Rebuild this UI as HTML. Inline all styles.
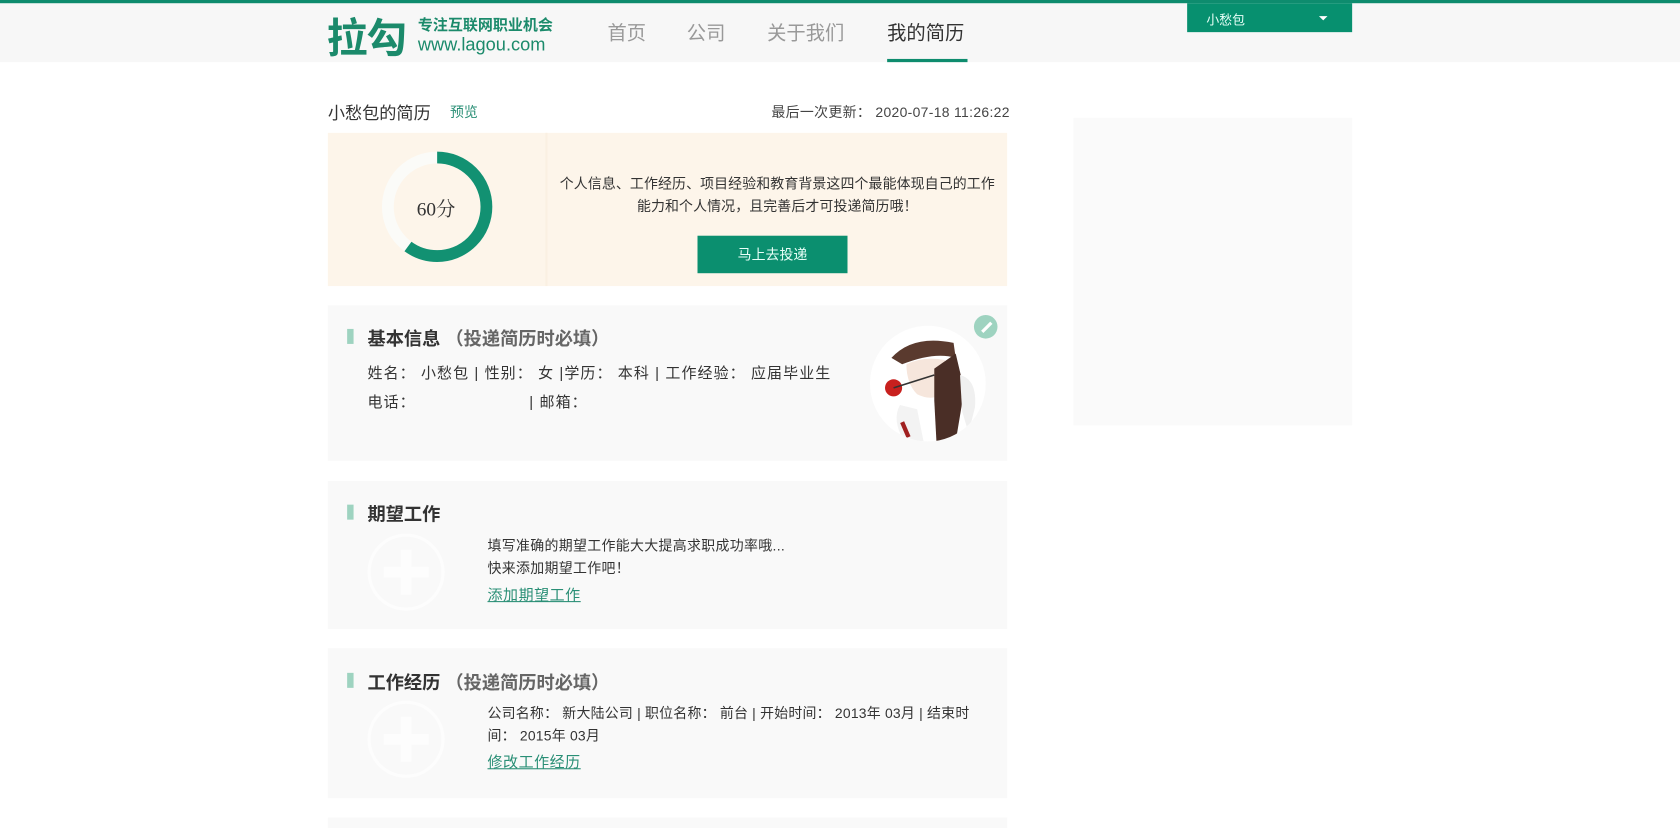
<!DOCTYPE html>
<html><head><meta charset="utf-8">
<style>
html,body{margin:0;padding:0;background:#fff;overflow:hidden;width:1680px;height:823px}
#w{position:absolute;left:0;top:0;width:1568px;height:768px;transform:scale(1.07143);transform-origin:0 0;font-family:"Liberation Sans","Noto Sans CJK SC",sans-serif;color:#333}
.a{position:absolute;white-space:nowrap}
.card{position:absolute;left:306px;width:634px;background:#f9f9f9}
.bar{position:absolute;left:18px;width:6px;height:14px;background:#9ed3c0}
.tt{position:absolute;left:37px;font-size:17px;font-weight:bold;color:#333}
.tt span{color:#666}
.plus{position:absolute;left:37px;width:66px;height:66px;border:3px solid #fdfdfd;border-radius:50%}
.plus:before{content:"";position:absolute;left:28px;top:12px;width:10px;height:42px;background:#fdfdfd}
.plus:after{content:"";position:absolute;left:12px;top:28px;width:42px;height:10px;background:#fdfdfd}
.lk{color:#2a8f76;text-decoration:underline;font-size:14px;letter-spacing:0.5px}
</style></head><body><div id="w">
<div class="a" style="left:0;top:0;width:1568px;height:58px;background:#f7f7f7"></div>
<div class="a" style="left:0;top:0;width:1568px;height:3px;background:#0e8c6e"></div>
<div class="a" style="left:305px;top:5px;font-size:38px;font-weight:bold;color:#1b8a6b;letter-spacing:-1px">拉勾</div>
<div class="a" style="left:390px;top:13px;font-size:14px;font-weight:bold;color:#1b8a6b">专注互联网职业机会</div>
<div class="a" style="left:390px;top:32px;font-size:17px;color:#1b8a6b">www.lagou.com</div>
<div class="a" style="left:567px;top:17px;font-size:18px;color:#999">首页</div>
<div class="a" style="left:641px;top:17px;font-size:18px;color:#999">公司</div>
<div class="a" style="left:716px;top:17px;font-size:18px;color:#999">关于我们</div>
<div class="a" style="left:828px;top:17px;font-size:18px;color:#333">我的简历</div>
<div class="a" style="left:828px;top:55px;width:75px;height:3px;background:#0e8c6e"></div>
<div class="a" style="left:1108px;top:3px;width:154px;height:27px;background:#07906f"></div>
<div class="a" style="left:1126px;top:10px;font-size:12px;color:#e8fff8">小愁包</div>
<div class="a" style="left:1231px;top:15px;width:0;height:0;border-left:4px solid transparent;border-right:4px solid transparent;border-top:4px solid #fff"></div>

<div class="a" style="left:306px;top:92px;font-size:16px;color:#333">小愁包的简历</div>
<div class="a" style="left:420px;top:94px;font-size:13px;color:#2a8f76">预览</div>
<div class="a" style="left:720px;top:94px;font-size:13px;color:#444;letter-spacing:0.3px">最后一次更新： 2020-07-18 11:26:22</div>

<div class="a" style="left:306px;top:124px;width:634px;height:143px;background:#fdf5ea"></div>
<div class="a" style="left:509px;top:124px;width:2px;height:143px;background:#faf0e2"></div>
<svg class="a" style="left:356px;top:141px" width="104" height="104" viewBox="0 0 104 104">
<circle cx="52" cy="52" r="46" fill="none" stroke="#fbfbf8" stroke-width="11"/>
<circle cx="52" cy="52" r="46" fill="none" stroke="#129172" stroke-width="11" stroke-dasharray="173.4 289" transform="rotate(-90 52 52)"/>
</svg>
<div class="a" style="left:389px;top:181px;font-size:18px;font-family:'Liberation Serif','Noto Serif CJK SC',serif;color:#333">60分</div>
<div class="a" style="left:511px;top:161px;width:429px;text-align:center;font-size:13px;line-height:21px;color:#333;white-space:normal;letter-spacing:0.1px">个人信息、工作经历、项目经验和教育背景这四个最能体现自己的工作<br>能力和个人情况，且完善后才可投递简历哦！</div>
<div class="a" style="left:651px;top:220px;width:140px;height:35px;background:#0b8f6f;color:#e8fff8;font-size:13px;text-align:center;line-height:36px">马上去投递</div>

<div class="card" style="top:285px;height:145px">
<div class="bar" style="top:22px"></div>
<div class="tt" style="top:17px">基本信息 <span>（投递简历时必填）</span></div>
<div class="a" style="left:37px;top:53px;font-size:14px;letter-spacing:1px">姓名： 小愁包 | 性别：  女 |学历： 本科 | 工作经验： 应届毕业生</div>
<div class="a" style="left:37px;top:80px;font-size:14px;letter-spacing:1px">电话：<span style="display:inline-block;width:106px"></span>| 邮箱：</div>
<div class="a" style="left:506px;top:19px;width:108px;height:108px;border-radius:50%;background:#fff;overflow:hidden">
<svg width="108" height="108" viewBox="0 0 108 108">
<path d="M20 30 Q40 8 78 16 L80 30 Q60 24 30 36 Z" fill="#5a3a2e"/>
<path d="M34 36 Q50 28 70 32 L72 60 Q60 72 44 64 Q34 54 34 36Z" fill="#f6e6dc"/>
<path d="M60 40 L80 26 L88 60 L80 108 L62 108 L60 70Z" fill="#4a2e26"/>
<path d="M84 46 Q100 50 98 76 L92 100 L86 80Z" fill="#f0f0f0"/>
<path d="M28 74 Q20 88 32 108 L50 108 L44 78Z" fill="#f3f3f3"/>
<circle cx="22" cy="58" r="8" fill="#c8201e"/>
<path d="M22 58 L60 46" stroke="#333" stroke-width="1.5"/>
<path d="M30 90 L36 104" stroke="#a02020" stroke-width="4"/>
</svg></div>
<div class="a" style="left:603px;top:9px;width:22px;height:22px;border-radius:50%;background:#9ed3c0"></div>
<div class="a" style="left:609px;top:19px;width:12px;height:3px;background:#fff;transform:rotate(-45deg)"></div>
</div>

<div class="card" style="top:449px;height:138px">
<div class="bar" style="top:22px"></div>
<div class="tt" style="top:17px">期望工作</div>
<div class="plus" style="top:49px"></div>
<div class="a" style="left:149px;top:50px;font-size:13px;line-height:21px;letter-spacing:0.3px">填写准确的期望工作能大大提高求职成功率哦...<br>快来添加期望工作吧！</div>
<div class="a lk" style="left:149px;top:96px">添加期望工作</div>
</div>

<div class="card" style="top:605px;height:140px">
<div class="bar" style="top:23px"></div>
<div class="tt" style="top:18px">工作经历 <span>（投递简历时必填）</span></div>
<div class="plus" style="top:49px"></div>
<div class="a" style="left:149px;top:50px;font-size:13px;line-height:21px;letter-spacing:0.2px">公司名称： 新大陆公司 | 职位名称： 前台 | 开始时间： 2013年 03月 | 结束时<br>间： 2015年 03月</div>
<div class="a lk" style="left:149px;top:96px">修改工作经历</div>
</div>
<div class="card" style="top:763px;height:10px"></div>

<div class="a" style="left:1002px;top:110px;width:260px;height:287px;background:#fafafa"></div>
</div></body></html>
